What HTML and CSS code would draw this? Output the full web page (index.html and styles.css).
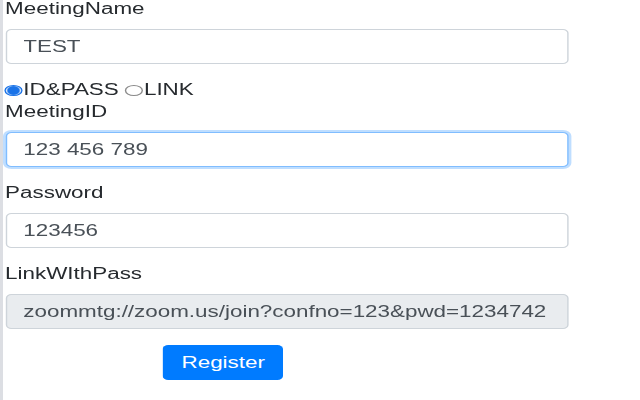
FILE: index.html
```html
<!DOCTYPE html>
<html lang="en">
<head>
<meta charset="utf-8">
<title>Meeting Register</title>
<link rel="stylesheet" href="styles.css">
</head>
<body>
<div class="frame">
  <form class="form">
    <div class="group">
      <label class="label" for="name">MeetingName</label>
      <input class="control" id="name" type="text" value="TEST">
    </div>
    <div class="radios">
      <label class="radio"><input type="radio" name="mode" checked>ID&amp;PASS</label>
      <label class="radio"><input type="radio" name="mode">LINK</label>
    </div>
    <div class="group">
      <label class="label" for="mid">MeetingID</label>
      <input class="control is-focus" id="mid" type="text" value="123 456 789">
    </div>
    <div class="group">
      <label class="label" for="pass">Password</label>
      <input class="control" id="pass" type="text" value="123456">
    </div>
    <div class="group group-last">
      <label class="label" for="link">LinkWIthPass</label>
      <input class="control is-readonly" id="link" type="text" value="zoommtg://zoom.us/join?confno=123&amp;pwd=1234742" readonly>
    </div>
    <div class="actions">
      <button class="btn" type="button">Register</button>
    </div>
  </form>
</div>
</body>
</html>
```
FILE: styles.css
```css
html, body {
  margin: 0;
  padding: 0;
  background: #ffffff;
}

body {
  font-family: "Liberation Sans", Arial, sans-serif;
  font-size: 16px;
  color: #262a2e;
}

.frame {
  display: flex;
  height: 400px;
  border-left: 3px solid #dcdee3;
  box-sizing: border-box;
  overflow: hidden;
}

.form {
  width: 420px;
  flex: none;
  padding-left: 1.5px;
  transform: scaleX(1.4);
  transform-origin: 0 0;
}

.group {
  margin-bottom: 17px;
}

.group-last {
  margin-bottom: 16px;
}

.label {
  display: block;
  line-height: 18px;
  margin-bottom: 11px;
}

.control {
  display: block;
  box-sizing: border-box;
  width: 402px;
  height: 35px;
  margin: 0;
  padding: 0 12px;
  border: 1px solid #ced4da;
  border-radius: 4px;
  background: #ffffff;
  font-family: "Liberation Sans", Arial, sans-serif;
  font-size: 16px;
  color: #495057;
  outline: none;
}

.control.is-focus {
  border-color: #80bdff;
  box-shadow: 0 0 0 2px rgba(0, 123, 255, 0.25);
}

.control.is-readonly {
  background: #e9ecef;
}

.radios {
  display: flex;
  align-items: center;
  line-height: 18px;
  margin-bottom: 4px;
}

.radio {
  display: flex;
  align-items: center;
  margin-right: 4px;
}

.radio input {
  appearance: none;
  -webkit-appearance: none;
  box-sizing: border-box;
  width: 13px;
  height: 11px;
  margin: 0 1px 0 -1px;
  border: 1px solid #8a8a8a;
  border-radius: 50%;
  background: #ffffff;
}

.radio + .radio input {
  margin-left: 0;
}

.radio input:checked {
  border: 1.5px solid #1a73e8;
  background: radial-gradient(circle, #1a73e8 0 55%, #d6e6fb 70%, #ffffff 100%);
}

.actions {
  padding-left: 112.8px;
}

.btn {
  width: 86px;
  height: 35px;
  padding: 0;
  border: none;
  border-radius: 4px;
  background: #007bff;
  color: #ffffff;
  font-family: "Liberation Sans", Arial, sans-serif;
  font-size: 16px;
}
```
